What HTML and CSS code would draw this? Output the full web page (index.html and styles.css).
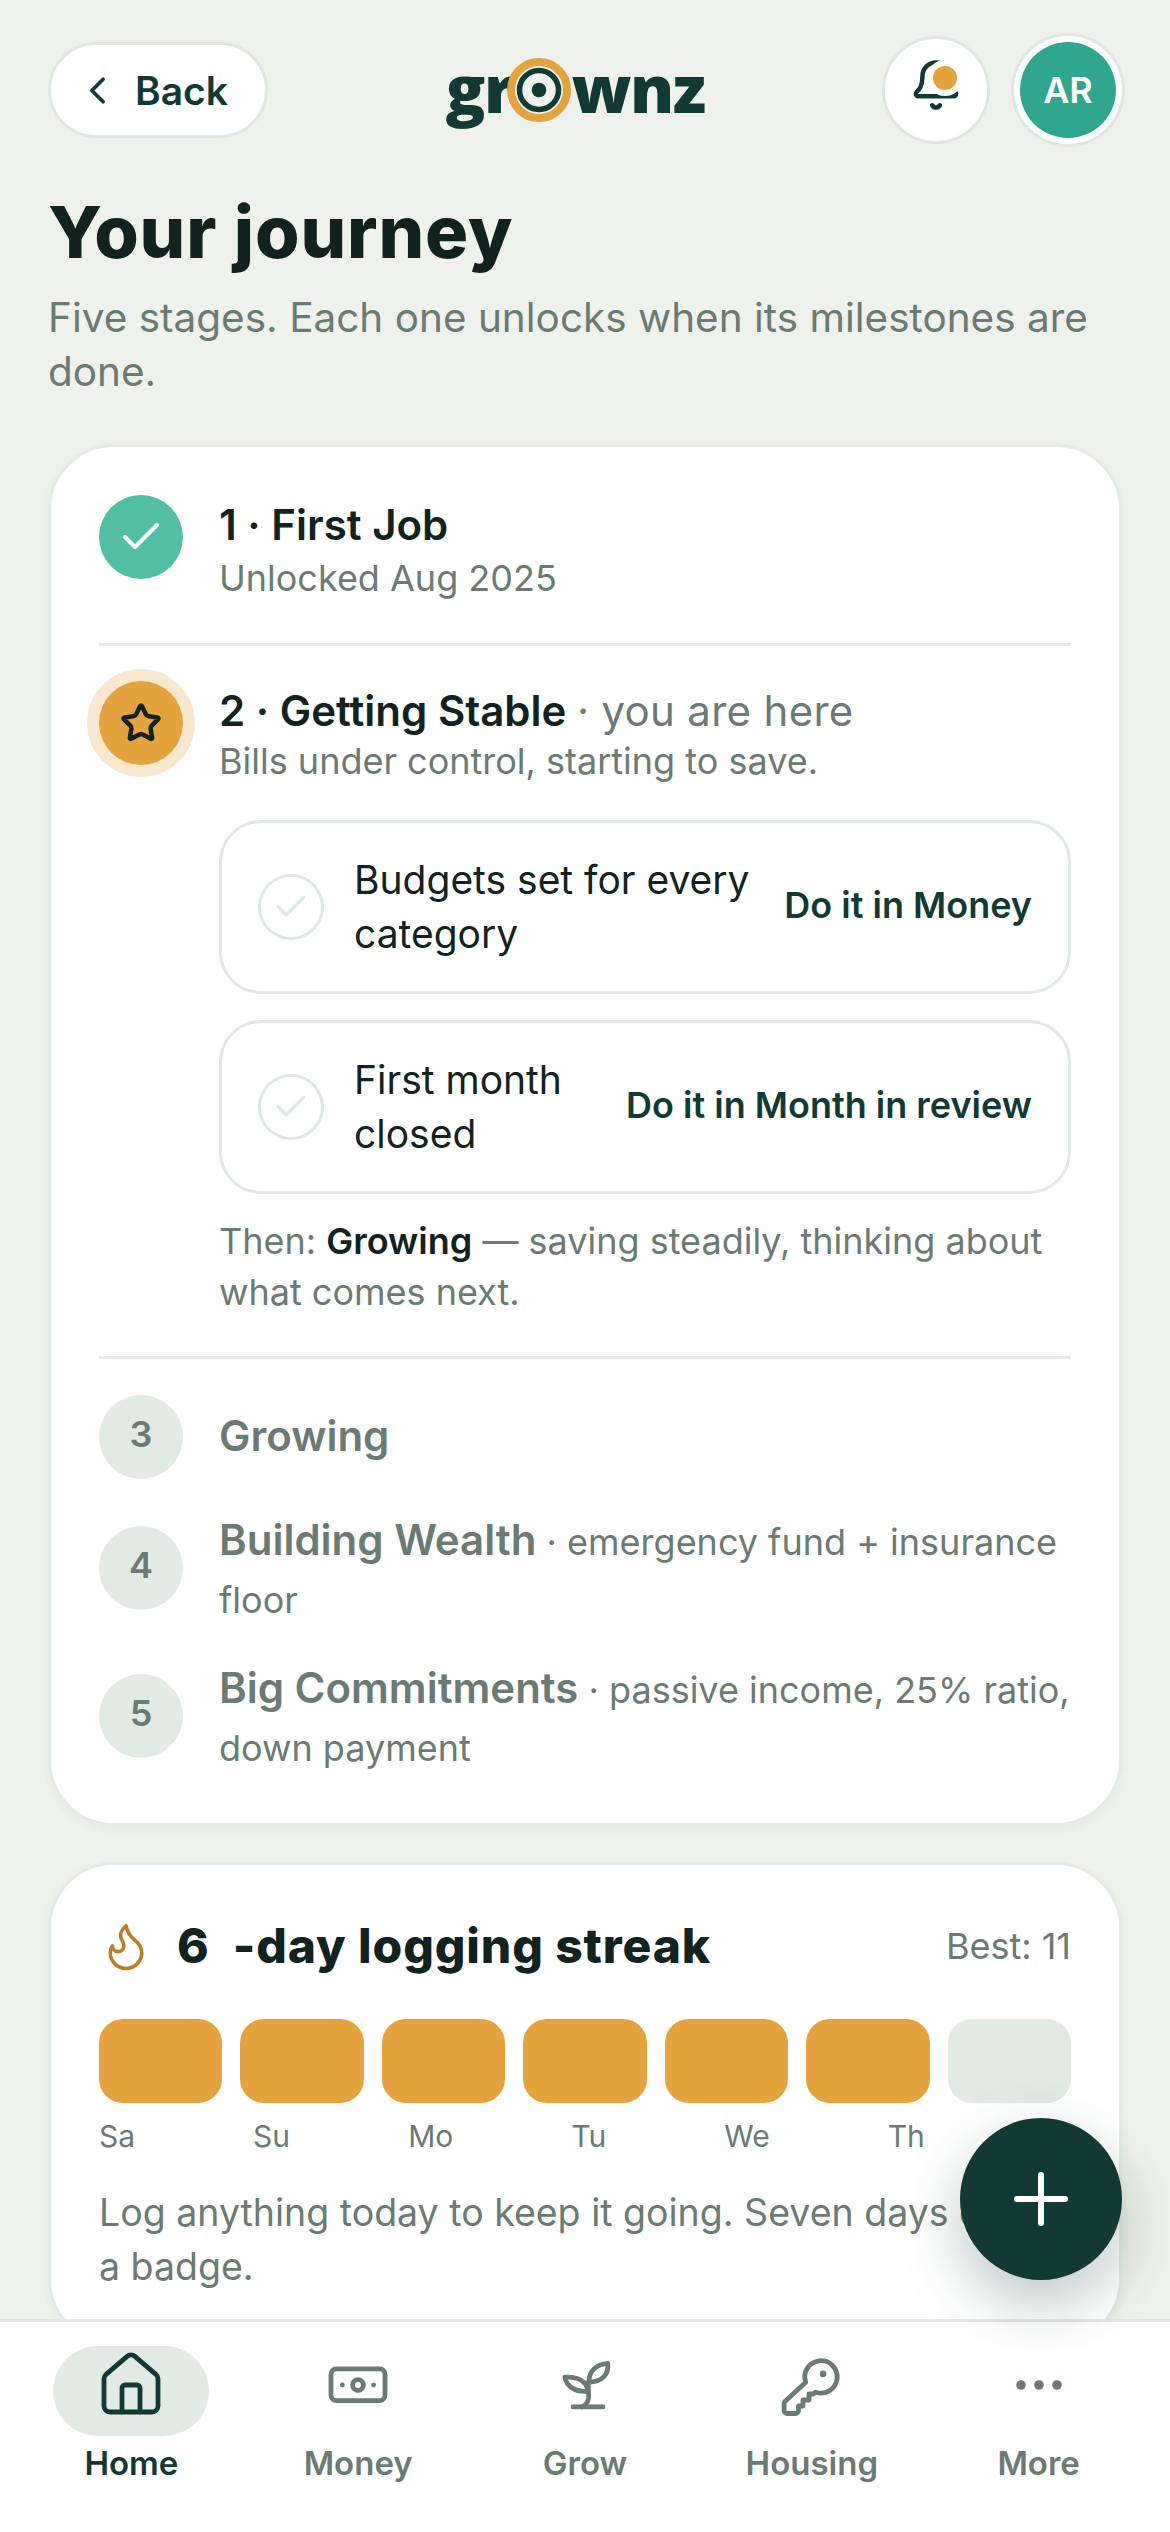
FILE: index.html
```html
<!DOCTYPE html>
<html lang="en">
<head>
<meta charset="utf-8">
<title>Your journey</title>
<link rel="stylesheet" href="styles.css">
</head>
<body>
<div class="app">
  <main class="screen">
    <header class="top">
      <button class="back">
        <svg class="back-ico" viewBox="0 0 24 24"><path d="m15 18-6-6 6-6"/></svg>
        <span>Back</span>
      </button>
      <div class="logo">
        <span class="logo-a">gr</span>
        <svg class="logo-ring" viewBox="0 0 64 64"><circle class="lr-gold" cx="32" cy="32" r="28"/><circle class="lr-dark" cx="32" cy="32" r="19.5"/><circle class="lr-dot" cx="32" cy="32" r="7.3"/></svg>
        <span class="logo-b">wnz</span>
      </div>
      <div class="top-actions">
        <div class="bell">
          <svg class="bell-ico" viewBox="0 0 24 24"><path d="M10.268 21a2 2 0 0 0 3.464 0"/><path d="M3.262 15.326A1 1 0 0 0 4 17h16a1 1 0 0 0 .74-1.673C19.41 13.956 18 12.499 18 8A6 6 0 0 0 6 8c0 4.499-1.411 5.956-2.738 7.326"/></svg>
          <span class="bell-dot"></span>
        </div>
        <div class="avatar">AR</div>
      </div>
    </header>

    <h1 class="title">Your journey</h1>
    <p class="lede">Five stages. Each one unlocks when its milestones are done.</p>

    <section class="card journey">
      <div class="stage stage-one">
        <div class="badge badge-done"><svg class="ico-check" viewBox="0 0 24 24"><path d="M20 6 9 17l-5-5"/></svg></div>
        <div class="stage-body">
          <div class="stage-title">1 · First Job</div>
          <div class="stage-sub">Unlocked Aug 2025</div>
        </div>
      </div>
      <div class="rule rule-a"></div>
      <div class="stage stage-two">
        <div class="badge badge-now"><svg class="ico-star" viewBox="0 0 24 24"><path d="M11.525 2.295a.53.53 0 0 1 .95 0l2.31 4.679a2.123 2.123 0 0 0 1.595 1.16l5.166.756a.53.53 0 0 1 .294.904l-3.736 3.638a2.123 2.123 0 0 0-.611 1.878l.882 5.14a.53.53 0 0 1-.771.56l-4.618-2.428a2.122 2.122 0 0 0-1.973 0L6.396 21.01a.53.53 0 0 1-.77-.56l.881-5.139a2.122 2.122 0 0 0-.611-1.879L2.16 9.795a.53.53 0 0 1 .294-.906l5.165-.755a2.122 2.122 0 0 0 1.597-1.16z"/></svg></div>
        <div class="stage-body">
          <div class="stage-title">2 · Getting Stable <span class="here">· you are here</span></div>
          <div class="stage-sub tight">Bills under control, starting to save.</div>
          <div class="tasks">
            <div class="task">
              <span class="tick"><svg class="ico-tick" viewBox="0 0 24 24"><path d="M20 6 9 17l-5-5"/></svg></span>
              <span class="task-name">Budgets set for every category</span>
              <span class="task-link">Do it in Money</span>
            </div>
            <div class="task">
              <span class="tick"><svg class="ico-tick" viewBox="0 0 24 24"><path d="M20 6 9 17l-5-5"/></svg></span>
              <span class="task-name">First month closed</span>
              <span class="task-link">Do it in Month in review</span>
            </div>
          </div>
          <p class="then">Then: <b>Growing</b> — saving steadily, thinking about what comes next.</p>
        </div>
      </div>
      <div class="rule rule-b"></div>
      <div class="later">
        <div class="stage later-row">
          <div class="badge badge-later">3</div>
          <div class="later-text single"><span class="later-name">Growing</span></div>
        </div>
        <div class="stage later-row">
          <div class="badge badge-later">4</div>
          <div class="later-text"><span class="later-name">Building Wealth</span> · emergency fund + insurance floor</div>
        </div>
        <div class="stage later-row">
          <div class="badge badge-later">5</div>
          <div class="later-text"><span class="later-name">Big Commitments</span> · passive income, 25% ratio, down payment</div>
        </div>
      </div>
    </section>

    <section class="card streak">
      <div class="streak-head">
        <svg class="ico-flame" viewBox="0 0 24 24"><path d="M8.5 14.5A2.5 2.5 0 0 0 11 12c0-1.38-.5-2-1-3-1.072-2.143-.224-4.054 2-6 .5 2.5 2 4.9 4 6.5 2 1.6 3 3.5 3 5.5a7 7 0 1 1-14 0c0-1.153.433-2.294 1-3a2.5 2.5 0 0 0 2.5 2.5z"/></svg>
        <span class="streak-num">6</span>
        <span class="streak-word">-day logging streak</span>
        <span class="streak-best">Best: 11</span>
      </div>
      <div class="bars">
        <span class="bar on"></span><span class="bar on"></span><span class="bar on"></span><span class="bar on"></span><span class="bar on"></span><span class="bar on"></span><span class="bar"></span>
      </div>
      <div class="days">
        <span>Sa</span><span>Su</span><span>Mo</span><span>Tu</span><span>We</span><span>Th</span><span>Fr</span>
      </div>
      <p class="streak-note">Log anything today to keep it going. Seven days earns a badge.</p>
    </section>
  </main>

  <button class="fab" aria-label="Add">
    <svg class="ico-plus" viewBox="0 0 54 54"><path d="M27 3v48M3 27h48"/></svg>
  </button>

  <nav class="nav">
    <div class="nav-item active">
      <span class="pill"><svg class="nav-ico" viewBox="0 0 24 24"><path d="M15 21v-8a1 1 0 0 0-1-1h-4a1 1 0 0 0-1 1v8"/><path d="M3 10a2 2 0 0 1 .709-1.528l7-5.999a2 2 0 0 1 2.582 0l7 5.999A2 2 0 0 1 21 10v9a2 2 0 0 1-2 2H5a2 2 0 0 1-2-2z"/></svg></span>
      <span class="nav-label">Home</span>
    </div>
    <div class="nav-item">
      <span class="pill"><svg class="nav-ico" viewBox="0 0 24 24"><rect x="3" y="6.6" width="18" height="10.6" rx="1.8"/><circle cx="12" cy="12" r="1.8"/><circle class="solid" cx="6.8" cy="12" r=".8"/><circle class="solid" cx="17.2" cy="12" r=".8"/></svg></span>
      <span class="nav-label">Money</span>
    </div>
    <div class="nav-item">
      <span class="pill"><svg class="nav-ico" viewBox="0 0 24 24"><path d="M8 19.3h10"/><path d="M11 19.3c2-1 2.4-2.3 2.2-4.2-.1-1.4-.2-2.8 0-4.1"/><path d="M13 14C12.6 11 9.8 9 5.3 9.4 5.8 12.4 8.8 14.6 13 14Z"/><path d="M13.3 11C13.3 7.5 15.6 5.1 19.6 4.8 20 8.5 17.6 11 13.3 11Z"/></svg></span>
      <span class="nav-label">Grow</span>
    </div>
    <div class="nav-item">
      <span class="pill"><svg class="nav-ico" viewBox="0 0 24 24"><path d="M9.9 11.1A5.4 5.4 0 1 1 13.2 14.4L12.4 15H11V17H9V19H7.5V20.5a1 1 0 0 1-1 1H3.7a1 1 0 0 1-1-1V18.2a1 1 0 0 1 .3-.7Z"/><circle class="solid" cx="15.7" cy="8.3" r="1.1"/></svg></span>
      <span class="nav-label">Housing</span>
    </div>
    <div class="nav-item">
      <span class="pill"><svg class="nav-ico" viewBox="0 0 24 24"><circle class="solid" cx="6" cy="12" r="1.6"/><circle class="solid" cx="12" cy="12" r="1.6"/><circle class="solid" cx="18" cy="12" r="1.6"/></svg></span>
      <span class="nav-label">More</span>
    </div>
  </nav>
</div>
</body>
</html>
```
FILE: styles.css
```css
* { box-sizing: border-box; }
html, body { margin: 0; padding: 0; }
body { font-family: Inter, "Liberation Sans", sans-serif; color: #12221e; background: #eff1ec; }
p, h1 { margin: 0; }
svg { display: block; fill: none; stroke: currentColor; stroke-linecap: round; stroke-linejoin: round; }

.app { position: relative; width: 1170px; height: 2532px; overflow: hidden; display: flex; flex-direction: column; }
.screen { height: 2319px; flex: none; overflow: hidden; padding: 36px 48px 0; }

.top { display: flex; align-items: center; justify-content: space-between; height: 108px; }
.back { display: flex; align-items: center; gap: 15px; height: 96px; padding: 2px 37px 0 24px; background: #fff; border: 3px solid #dfe7e3; border-radius: 48px; color: #123a34; font: 600 39px/54px Inter, sans-serif; }
.back-ico { width: 45px; height: 45px; stroke-width: 2; margin-top: -2px; }

.logo { display: flex; align-items: flex-start; height: 64px; color: #123a34; font: 800 66px/58px "Open Sans", sans-serif; letter-spacing: -1.5px; }
.logo-ring { width: 64px; height: 64px; flex: none; margin: 0 0 0 -6px; position: relative; }
.lr-gold { fill: #eff1ec; stroke: #e4a33c; stroke-width: 8; }
.lr-dark { stroke: #123a34; stroke-width: 5.5; }
.lr-dot { fill: #123a34; stroke: none; }

.top-actions { display: flex; align-items: center; gap: 30px; padding-right: 6px; }
.bell { position: relative; width: 108px; height: 108px; display: flex; justify-content: center; padding-top: 19px; background: #fff; border: 3px solid #dfe7e3; border-radius: 50%; color: #123a34; }
.bell-ico { width: 54px; height: 54px; stroke-width: 2; }
.bell-dot { position: absolute; top: 21px; left: 42px; width: 36px; height: 36px; background: #e4a33c; border: 6px solid #fff; border-radius: 50%; }
.avatar { width: 96px; height: 96px; display: flex; align-items: center; justify-content: center; background: #2ea690; color: #fff; border-radius: 50%; font: 600 36px/44px Inter, sans-serif; box-shadow: 0 0 0 6px #fff, 0 0 0 9px #dfe7e3; }

.title { margin-top: 46px; font: 800 72px/84px Inter, sans-serif; letter-spacing: .85px; color: #12221e; }
.lede { margin-top: 17px; font-size: 40.5px; line-height: 54px; color: #6b7b73; }

.card { background: #fff; border: 3px solid #e4eae6; border-radius: 66px; box-shadow: 0 3px 9px rgba(18, 58, 52, .05); }
.journey { margin-top: 45px; padding: 48px 48px 48px; }
.stage { display: flex; gap: 36px; }
.stage-body { flex: 1; min-width: 0; }
.stage-two { padding-top: 35px; }
.stage-two .stage-body { margin-top: 3px; }
.stage-one .stage-body { margin-top: 3px; }
.stage-title { font-size: 42px; line-height: 54px; font-weight: 600; color: #12221e; }
.stage-sub { font-size: 36px; line-height: 52px; color: #6b7b73; }
.stage-sub.tight { line-height: 46px; }
.here { font-weight: 400; color: #6b7b73; letter-spacing: .3px; }
.rule { height: 3px; background: #e6ebe7; }
.rule-a { margin-top: 39px; }
.rule-b { margin-top: 38px; }

.badge { flex: none; width: 84px; height: 84px; display: flex; align-items: center; justify-content: center; border-radius: 50%; }
.badge-done { background: #52bea5; color: #fff; }
.ico-check { width: 48px; height: 48px; stroke-width: 2; }
.badge-now { background: #e4a33c; color: #12221e; box-shadow: 0 0 0 12px #f8e8d0; }
.ico-star { width: 42px; height: 42px; stroke-width: 2.6; }
.badge-later { background: #e2eae6; color: #6b7b73; font-size: 36px; font-weight: 600; padding-bottom: 6px; }

.tasks { display: flex; flex-direction: column; gap: 26px; margin-top: 36px; }
.task { display: flex; align-items: center; gap: 30px; padding: 30px 36px; background: #fff; border: 3px solid #e2e8e4; border-radius: 42px; }
.tick { flex: none; width: 66px; height: 66px; display: flex; align-items: center; justify-content: center; border: 3px solid #dfe7e3; border-radius: 50%; color: #dfe7e3; }
.ico-tick { width: 38px; height: 38px; stroke-width: 2.2; }
.task-name { flex: 1; min-width: 0; font-size: 39px; line-height: 54px; color: #12221e; }
.task-link { flex: none; padding-bottom: 4px; font-size: 36px; line-height: 48px; font-weight: 600; color: #123a34; }

.then { margin-top: 22px; font-size: 36px; line-height: 51px; color: #6b7b73; }
.then b { font-weight: 600; color: #12221e; }

.later { display: flex; flex-direction: column; padding-top: 36px; }
.later-row { align-items: center; margin-top: 30px; }
.later-row:first-child { margin-top: 0; }
.later-row:last-child { margin-top: 30px; }
.later-text { flex: 1; min-width: 0; margin: 2px 0 -2px; font-size: 36px; line-height: 58px; color: #6b7b73; }
.later-text.single { margin: 0; }
.later-name { font-size: 42px; font-weight: 600; }

.streak { margin-top: 36px; padding: 46px 48px 48px; }
.streak-head { display: flex; align-items: center; height: 70px; }
.ico-flame { flex: none; width: 54px; height: 54px; stroke-width: 1.6; color: #bd7d25; margin-right: 24px; }
.streak-num, .streak-word { font-size: 48px; line-height: 60px; font-weight: 800; color: #12221e; }
.streak-word { margin-left: 24px; flex: 1; letter-spacing: .9px; }
.streak-best { font-size: 36px; line-height: 48px; color: #6b7b73; }
.bars { display: flex; gap: 18px; margin-top: 38px; }
.bar { flex: 1; height: 84px; border-radius: 24px; background: #e2eae6; }
.bar.on { background: #e4a33c; }
.days { display: flex; justify-content: space-between; margin-top: 13px; font-size: 30px; line-height: 40px; color: #6b7b73; }
.streak-note { margin-top: 30px; font-size: 37.5px; line-height: 54px; color: #6b7b73; }

.fab { position: absolute; left: 960px; top: 2118px; z-index: 5; width: 162px; height: 162px; padding: 0; display: flex; align-items: center; justify-content: center; background: #123a34; color: #fff; border: 0; border-radius: 50%; box-shadow: 0 24px 60px rgba(18, 58, 52, .28); }
.ico-plus { width: 54px; height: 54px; stroke-width: 6; }

.nav { flex: 1; display: grid; grid-template-columns: repeat(5, 1fr); padding: 24px 18px 0; background: #fff; border-top: 3px solid #e0e8e3; }
.nav-item { display: flex; flex-direction: column; align-items: center; color: #6b7b73; }
.nav-item.active { color: #123a34; }
.pill { display: block; width: 156px; height: 90px; padding: 3px 42px 15px; border-radius: 45px; }
.active .pill { background: #e2eae6; }
.nav-ico { width: 72px; height: 72px; stroke-width: 1.6; }
.solid { fill: currentColor; stroke: none; }
.nav-label { margin-top: 5px; font-size: 33px; line-height: 45px; font-weight: 600; }
```
